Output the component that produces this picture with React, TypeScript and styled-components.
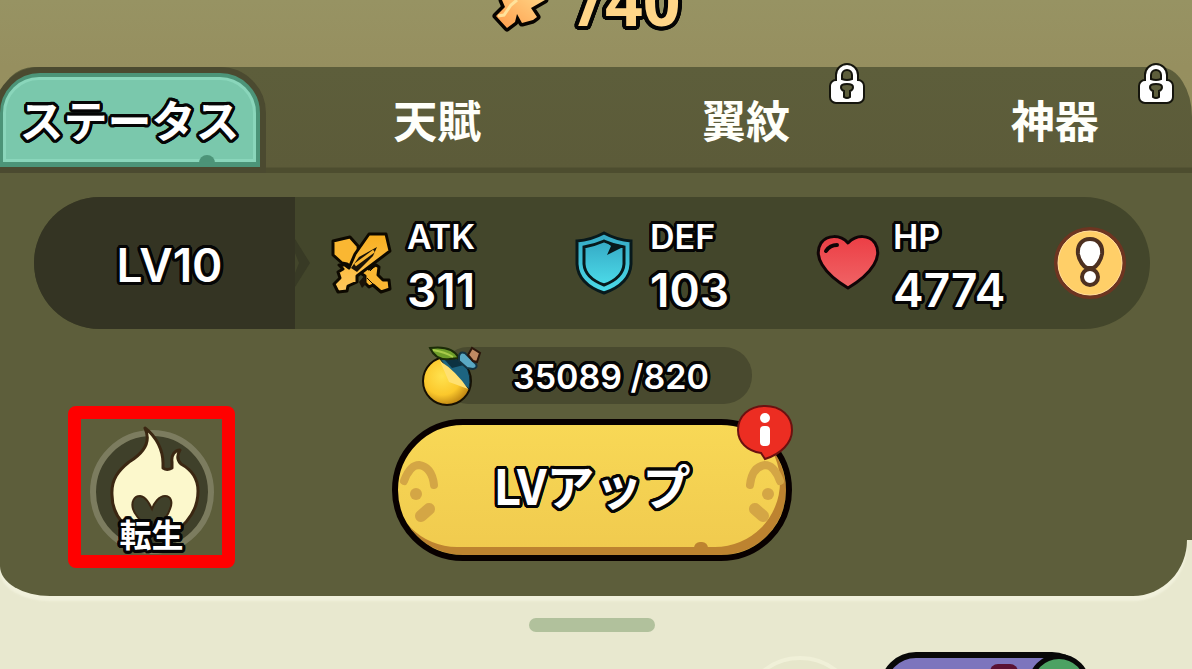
import React from "react";
import styled, { createGlobalStyle } from "styled-components";

const latin = `Inter, "Noto Sans CJK JP", sans-serif`;
const japanese = `"Noto Sans CJK JP", sans-serif`;

/* A round-cornered outline: solid shadows placed on a circle round each letter. */
const outline = (radius: number) =>
  Array.from({ length: 24 }, (_, i) => {
    const a = (i * Math.PI) / 12;
    return `${(Math.cos(a) * radius).toFixed(2)}px ${(Math.sin(a) * radius).toFixed(2)}px 0 #050505`;
  }).join(", ");

const Global = createGlobalStyle`
  * { box-sizing: border-box; }
  body { margin: 0; background: #e8e8cf; font-family: ${latin}; overflow: hidden; }
  button { border: 0; padding: 0; background: none; color: inherit; font: inherit; cursor: pointer; }
  svg { display: block; flex: none; overflow: visible; }
`;

const Page = styled.main`
  min-height: 100vh;
  overflow: hidden;
  background: #e8e8cf;
`;

const Scene = styled.div`
  background: linear-gradient(#979363, #968f5f 67px, #969160);
`;

const PowerRow = styled.header`
  display: flex;
  justify-content: center;
  align-items: flex-start;
  gap: 28px;
  height: 67px;
  padding-right: 20px;
`;

const Outlined = styled.span<{ $size: number; $weight?: number; $jp?: boolean; $stroke?: number }>`
  display: block;
  font-family: ${(p) => (p.$jp ? japanese : latin)};
  font-size: ${(p) => p.$size}px;
  font-weight: ${(p) => p.$weight ?? 600};
  line-height: 1;
  color: #fff;
  white-space: nowrap;
  text-shadow: ${(p) => outline(p.$stroke ?? 3)};
`;

const Power = styled(Outlined)`
  font-family: "Open Sans", sans-serif;
  color: #ffd588;
  margin-top: -33px;
`;

const Tabs = styled.nav`
  display: grid;
  grid-template-columns: 266px 1fr 1fr 1fr;
  height: 106px;
  background: linear-gradient(#5d5e3b, #5c5b39 100px, #4d4d2f 101px);
  border-top-right-radius: 32px 50px;
  border-top-left-radius: 34px 36px;
`;

const ActiveTab = styled.button`
  position: relative;
  margin-left: -6px;
  border: 6px solid #4b4a30;
  border-radius: 46px 46px 0 0;
  background: #4c9478;
  padding: 4px 4px 5px 3px;
  display: flex;
`;

const ActiveFace = styled.span`
  flex: 1;
  display: flex;
  align-items: center;
  justify-content: center;
  padding: 0 0 2px;
  border: 3px solid #8ad6bb;
  border-radius: 36px 36px 0 0;
  background: #7ac8ac;
`;

const TabNotch = styled.span`
  position: absolute;
  right: 45px;
  bottom: 3px;
  width: 16px;
  height: 9px;
  border-radius: 8px 8px 0 0;
  background: #4c9478;
`;

const Tab = styled.button`
  position: relative;
  display: flex;
  align-items: center;
  justify-content: center;
  padding: 0 0 2px 34px;
  color: #fffffa;
  font: 700 44px/1 ${japanese};
`;

const TabLock = styled.span`
  position: absolute;
  top: -5px;
  right: 18px;
`;

const Panel = styled.section`
  position: relative;
  margin-right: 5px;
  padding: 24px 37px 28px 34px;
  background: #5d5e3b;
  border-bottom-left-radius: 50px 30px;
  border-bottom-right-radius: 54px 56px;
  box-shadow: 0 5px 2px #f1f1dc;
  &::after {
    content: "";
    position: absolute;
    top: 0;
    right: -5px;
    bottom: 56px;
    width: 5px;
    background: #5d5e3b;
  }
`;

const StatBar = styled.div`
  display: flex;
  height: 132px;
  border-radius: 66px;
  overflow: hidden;
  background: #43462b;
`;

const Level = styled.div`
  position: relative;
  flex: none;
  width: 261px;
  display: flex;
  align-items: center;
  justify-content: center;
  padding: 4px 0 0 10px;
  background: #343423;
`;

const LevelArrow = styled.span`
  position: absolute;
  left: 261px;
  top: 42px;
`;

const Stats = styled.dl`
  flex: 1;
  min-width: 0;
  display: grid;
  grid-template-columns: 243px 243px 1fr;
  margin: 0;
  padding-left: 36px;
`;

const Stat = styled.div`
  display: grid;
  grid-template-columns: 60px 1fr;
  column-gap: 16px;
  align-items: center;
`;

const StatText = styled.div`
  display: flex;
  flex-direction: column;
  gap: 13px;
  padding-top: 7px;
  dt, dd { margin: 0; }
`;

const InfoButton = styled.button`
  align-self: center;
  flex: none;
  margin-right: 22px;
`;

const Actions = styled.div`
  display: grid;
  grid-template-columns: 1fr 400px 1fr;
  align-items: start;
  padding: 18px 0 0;
`;

const RebirthButton = styled.button`
  position: relative;
  display: flex;
  flex-direction: column;
  align-items: center;
  width: 167px;
  height: 162px;
  margin: 59px 0 0 34px;
  padding-top: 10px;
  border: 13px solid #f00;
  border-radius: 8px;
`;

const RebirthLabel = styled(Outlined)`
  position: absolute;
  left: 0;
  right: 0;
  bottom: 6px;
  text-align: center;
`;

const Upgrade = styled.div`
  display: flex;
  flex-direction: column;
  align-items: center;
  gap: 15px;
`;

const Cost = styled.div`
  position: relative;
  display: flex;
  align-items: center;
  justify-content: center;
  width: 312px;
  height: 57px;
  margin-left: 8px;
  padding: 2px 0 0 30px;
  border-radius: 28px;
  background: #494a2f;
`;

const CostIcon = styled.span`
  position: absolute;
  left: -18px;
  top: 0;
`;

const LevelUpButton = styled.button`
  position: relative;
  display: flex;
  align-items: center;
  justify-content: center;
  width: 400px;
  height: 142px;
  padding-bottom: 12px;
  border: 6px solid #080000;
  border-radius: 71px;
  background: linear-gradient(#f8d856, #f0ca4e);
  box-shadow: inset -6px -8px 0 #bd8330;
`;

const Carving = styled.span<{ $side: "left" | "right" }>`
  position: absolute;
  top: 34px;
  ${(p) => p.$side}: 4px;
  transform: ${(p) => (p.$side === "right" ? "scaleX(-1)" : "none")};
`;

const ButtonNotch = styled.span`
  position: absolute;
  right: 78px;
  bottom: 7px;
  width: 14px;
  height: 6px;
  border-radius: 7px 7px 0 0;
  background: #bd8330;
`;

const Badge = styled.span`
  position: absolute;
  top: -20px;
  right: -7px;
`;

const Drawer = styled.footer`
  display: grid;
  grid-template-columns: 1fr 126px 1fr;
  padding-top: 22px;
`;

const Handle = styled.div`
  grid-column: 2;
  height: 14px;
  margin: 0 4px 0 -4px;
  border-radius: 7px;
  background: #b1c19c;
`;

const DrawerCards = styled.div`
  grid-column: 1 / -1;
  display: flex;
  justify-content: flex-end;
  align-items: flex-start;
  gap: 20px;
  height: 37px;
  padding: 20px 104px 0 0;
  overflow: hidden;
`;

const SlotRing = styled.div`
  width: 120px;
  height: 120px;
  margin-top: 4px;
  border: 4px solid #f0f0d8;
  border-radius: 50%;
  background: #e6e6cb;
`;

const ItemCard = styled.div`
  position: relative;
  width: 208px;
  height: 120px;
  border: 6px solid #080808;
  border-radius: 36px;
  background: #7d75bd;
`;

const CardMark = styled.span`
  position: absolute;
  left: 104px;
  top: 6px;
  width: 28px;
  height: 30px;
  border-radius: 8px;
  background: #5a1233;
`;

const CardGem = styled.span`
  position: absolute;
  right: -8px;
  top: -4px;
  width: 62px;
  height: 62px;
  border: 5px solid #080808;
  border-radius: 50%;
  background: #4da263;
`;

const GoldSword = () => (
  <svg width="58" height="34" viewBox="0 0 58 34" aria-hidden="true">
    <defs>
      <linearGradient id="gold" x1="0" y1="1" x2="1" y2="0">
        <stop offset="0" stopColor="#ff9c4b" />
        <stop offset="1" stopColor="#ffd98a" />
      </linearGradient>
    </defs>
    <path d="M10-8V0L13 7 4 16 15 28 23 22 25 14 30 23 41 20 45 17 39 8 53 0V-8Z" fill="url(#gold)" stroke="#070300" strokeWidth="7" strokeLinejoin="round" paintOrder="stroke" />
    <path d="M6 16 12 15 19 5 25 0" fill="none" stroke="#ffe29b" strokeWidth="3" />
  </svg>
);

const LockIcon = () => (
  <svg width="36" height="42" viewBox="0 0 36 42" role="img" aria-label="ロック">
    <path d="M7 18v-5a11 11 0 0 1 22 0v5a6 6 0 0 1 6 6v11a6 6 0 0 1-6 6H7a6 6 0 0 1-6-6V24a6 6 0 0 1 6-6Z" fill="#fff" stroke="#15150d" strokeWidth="2" />
    <path d="M13 17v-4a5 5 0 0 1 10 0v4q-5 2-10 0Z" fill="#5d5e3b" stroke="#15150d" strokeWidth="2" />
    <path d="M12 25q0-3 6-3t6 3q0 3-3 4v6q-3 2-6 0v-6q-3-1-3-4Z" fill="#5d5e3b" stroke="#15150d" strokeWidth="2" />
  </svg>
);

const AttackIcon = () => (
  <svg width="60" height="62" viewBox="0 0 60 62" aria-hidden="true">
    <defs>
      <linearGradient id="blade" x1="0" y1="0" x2="0" y2="1">
        <stop stopColor="#f8af1f" />
        <stop offset="1" stopColor="#ffc85e" />
      </linearGradient>
    </defs>
    <g fill="#fab732" stroke="#0d0900" strokeWidth="3" strokeLinejoin="round">
      <path d="M2 9 19 5 27 14 28 25 38 37 45 33 48 35 47 43 52 48 58 48 59 57 50 60 42 53 38 55 34 51 34 44 16 32 11 31 2 23Z" />
      <path d="M38 2 55 2 59 19 26 44 26 50 17 54 16 59 7 60 3 52 9 46 7 40 12 37 8 33 14 33 18 36 24 22Z" fill="url(#blade)" />
      <path d="M36 46 43 53M45 33 39 39" fill="none" strokeWidth="1" />
    </g>
    <path d="M20 36 28 25 46 15 42 24 26 40ZM28 50l6-7 1 9-4 4Z" fill="#1a1308" />
    <path d="M24 33 43 19" stroke="#fab732" strokeWidth="3" />
  </svg>
);

const ShieldIcon = () => (
  <svg width="60" height="64" viewBox="0 0 60 64" aria-hidden="true">
    <defs>
      <linearGradient id="steel" x1="0" y1="0" x2="0" y2="1">
        <stop stopColor="#35a9c5" />
        <stop offset="1" stopColor="#4cdbe9" />
      </linearGradient>
    </defs>
    <path d="M30 2Q43 9 57 10V33Q56 53 30 62 4 53 3 33V10Q17 9 30 2Z" fill="url(#steel)" stroke="#08191c" strokeWidth="3" />
    <path d="M30 10Q39 14 50 16V33Q49 47 30 54 11 47 10 33V16Q21 14 30 10Z" fill="url(#steel)" stroke="#08191c" strokeWidth="3" />
    <path d="m32 11 5 4-4 9 14-7 3-2Z" fill="#08191c" />
  </svg>
);

const HeartIcon = () => (
  <svg width="64" height="56" viewBox="0 0 64 56" aria-hidden="true">
    <defs>
      <linearGradient id="heart" x1="0" y1="0" x2="0" y2="1">
        <stop stopColor="#ec3e45" />
        <stop offset="1" stopColor="#f06466" />
      </linearGradient>
    </defs>
    <path d="M31 8C40-1 52 0 58 8 66 21 56 38 31 53 6 38-4 21 4 8 10 0 23-1 31 8Z" fill="url(#heart)" stroke="#100507" strokeWidth="3" strokeLinejoin="round" />
    <path d="M9 16q4-6 11-6" fill="none" stroke="#100507" strokeWidth="4" strokeLinecap="round" />
  </svg>
);

const AlertIcon = () => (
  <svg width="76" height="76" viewBox="0 0 76 76" aria-hidden="true">
    <circle cx="38" cy="38" r="34" fill="#ffd169" stroke="#6d3521" strokeWidth="4" />
    <circle cx="38" cy="38" r="32" fill="#ffcf68" stroke="#ffdc9b" strokeWidth="1" />
    <g fill="#fff" stroke="#4d3020" strokeWidth="4">
      <path d="M38 14c8 0 13 6 12 15-1 7-6 13-9 14h-6c-3-1-8-7-9-14-1-9 4-15 12-15Z" />
      <circle cx="38" cy="52" r="8" />
    </g>
  </svg>
);

const FruitIcon = () => (
  <svg width="60" height="60" viewBox="0 0 60 60" aria-hidden="true">
    <defs>
      <radialGradient id="fruit" cx=".4" cy=".4" r=".65">
        <stop stopColor="#ffe24f" />
        <stop offset=".6" stopColor="#fbc82c" />
        <stop offset="1" stopColor="#b77d10" />
      </radialGradient>
    </defs>
    <circle cx="25" cy="34" r="24" fill="url(#fruit)" stroke="#161003" strokeWidth="2" />
    <path d="M18 12Q34 7 43 18 50 28 47 42L30 28Z" fill="#1d6480" stroke="#0a222c" strokeWidth="1" />
    <path d="M22 12q13-3 20 6l-12 3Z" fill="#0c3242" />
    <path d="M18 14Q34 24 46 42L38 39 27 35Z" fill="#ffe071" />
    <path d="M8 1Q30-2 37 11L28 12Q14 14 8 1Z" fill="#6f9f2a" stroke="#1c2c08" strokeWidth="2" />
    <path d="M11 3q12 2 20 7" fill="none" stroke="#a8cb4a" strokeWidth="2" />
    <path d="M37 9Q38 4 43 6L54 17Q56 21 51 22L45 21 37 14Z" fill="#5aa9c4" stroke="#153542" strokeWidth="2" />
    <path d="M46 8 50 1 58 6 55 15 51 14Z" fill="#c08a63" stroke="#2c170c" strokeWidth="2" />
  </svg>
);

const FlameIcon = () => (
  <svg width="126" height="126" viewBox="0 0 126 126" aria-hidden="true">
    <circle cx="63" cy="63" r="59" fill="#3f402a" stroke="#7c7c5f" strokeWidth="6" />
    <path d="M56-1C68 8 74 22 74 34V39Q78 42 83 39V33C82 26 86 21 91 21 88 26 88 31 92 35 103 41 109 49 109 62 109 83 93 107 65 107S23 85 23 66C22 50 30 41 40 33 53 25 63 14 56-1Z" fill="#fcf8cc" stroke="#3b2712" strokeWidth="3" strokeLinejoin="round" />
    <path d="M63 80C65 74 70 67 76 67 82 67 84 73 81 80 79 87 72 94 67 98H59C54 94 46 87 44 80 42 73 45 67 51 67 57 68 60 74 63 80Z" fill="#3f402a" stroke="#3b2712" strokeWidth="2" />
  </svg>
);

const FaceCarving = () => (
  <svg width="40" height="64" viewBox="0 0 40 64" aria-hidden="true">
    <g fill="none" stroke="#d4a645" strokeLinecap="round">
      <path d="M2 22Q8 6 17 6 30 8 32 26" strokeWidth="8" />
      <path d="m19 57 8-7" strokeWidth="12" />
    </g>
    <circle cx="14" cy="35" r="6" fill="#d4a645" />
  </svg>
);

const NoticeIcon = () => (
  <svg width="56" height="56" viewBox="0 0 56 56" aria-hidden="true">
    <path d="M28 1C44 1 55 11 55 25 55 38 44 49 28 54L24 48C10 46 1 37 1 25 1 11 12 1 28 1Z" fill="#ec2d22" stroke="#6b1110" strokeWidth="2" />
    <circle cx="28" cy="13" r="5" fill="#fff" />
    <rect x="23" y="21" width="10" height="20" rx="4" fill="#fff" />
  </svg>
);

const stats = [
  { label: "ATK", value: "311", icon: <AttackIcon /> },
  { label: "DEF", value: "103", icon: <ShieldIcon /> },
  { label: "HP", value: "4774", icon: <HeartIcon /> },
];

const tabs = [
  { label: "天賦", locked: false },
  { label: "翼紋", locked: true },
  { label: "神器", locked: true },
];

export default function App() {
  return (
    <Page>
      <Global />
      <Scene>
        <PowerRow>
          <GoldSword />
          <Power $size={66} $weight={700} $stroke={4}>/40</Power>
        </PowerRow>
        <Tabs>
          <ActiveTab type="button">
            <ActiveFace><Outlined $size={44} $weight={700} $jp>ステータス</Outlined></ActiveFace>
            <TabNotch />
          </ActiveTab>
          {tabs.map((tab) => (
            <Tab type="button" key={tab.label}>
              {tab.label}
              {tab.locked && <TabLock><LockIcon /></TabLock>}
            </Tab>
          ))}
        </Tabs>
      </Scene>
      <Panel>
        <StatBar>
          <Level>
            <Outlined $size={46}>LV10</Outlined>
            <LevelArrow>
              <svg width="16" height="48" viewBox="0 0 16 48" aria-hidden="true">
                <path d="M0 0 15 24 0 48V34L4 24 0 14Z" fill="#383a25" />
              </svg>
            </LevelArrow>
          </Level>
          <Stats>
            {stats.map((s) => (
              <Stat key={s.label}>
                {s.icon}
                <StatText>
                  <dt><Outlined $size={34}>{s.label}</Outlined></dt>
                  <dd><Outlined $size={46}>{s.value}</Outlined></dd>
                </StatText>
              </Stat>
            ))}
          </Stats>
          <InfoButton type="button" aria-label="詳細"><AlertIcon /></InfoButton>
        </StatBar>
        <Actions>
          <RebirthButton type="button">
            <FlameIcon />
            <RebirthLabel $size={32} $weight={700} $jp>転生</RebirthLabel>
          </RebirthButton>
          <Upgrade>
            <Cost>
              <CostIcon><FruitIcon /></CostIcon>
              <Outlined $size={34}>35089 /820</Outlined>
            </Cost>
            <LevelUpButton type="button">
              <Carving $side="left"><FaceCarving /></Carving>
              <Carving $side="right"><FaceCarving /></Carving>
              <ButtonNotch />
              <Outlined $size={48} $weight={700} $jp>LVアップ</Outlined>
              <Badge><NoticeIcon /></Badge>
            </LevelUpButton>
          </Upgrade>
        </Actions>
      </Panel>
      <Drawer>
        <Handle />
        <DrawerCards>
          <SlotRing />
          <ItemCard><CardMark /><CardGem /></ItemCard>
        </DrawerCards>
      </Drawer>
    </Page>
  );
}
